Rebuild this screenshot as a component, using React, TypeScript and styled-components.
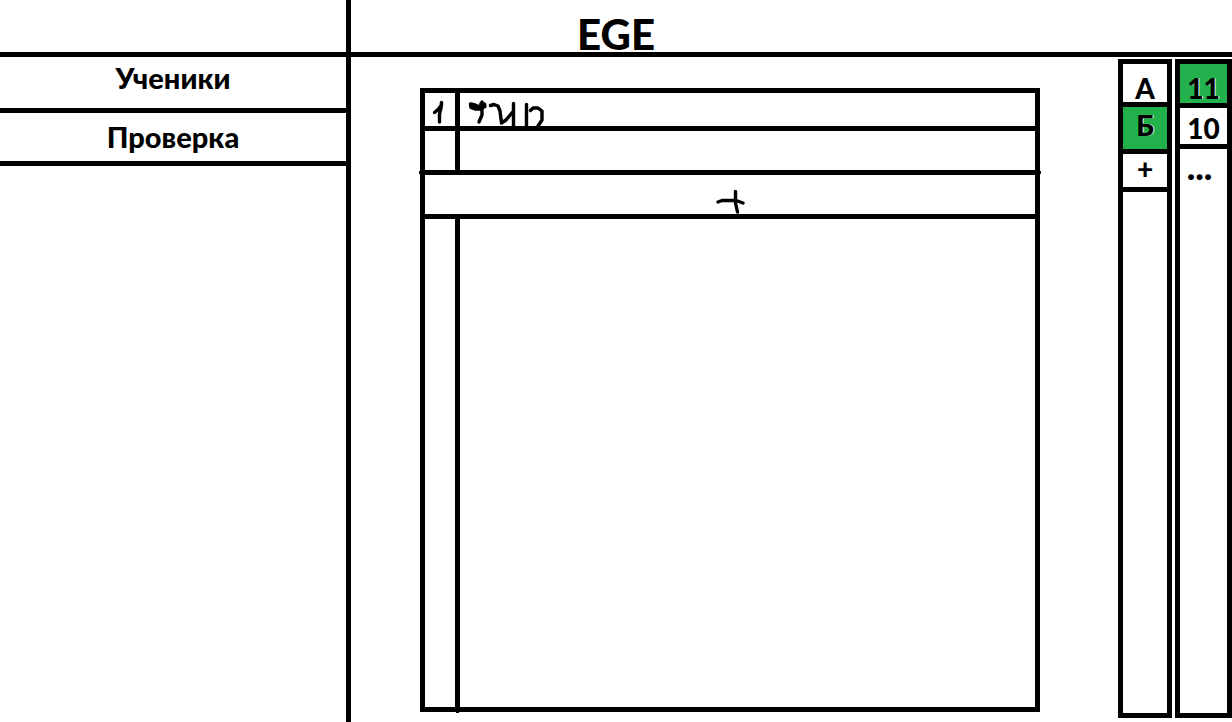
import React from 'react';
import styled, { createGlobalStyle } from 'styled-components';

const INK = '#000';
const PAPER = '#fff';
const GREEN = '#22b14c';

const GlobalStyle = createGlobalStyle`
  * { box-sizing: border-box; }
  body {
    margin: 0;
    background: ${PAPER};
    color: ${INK};
    font-family: Lato, 'Open Sans', 'Noto Sans', sans-serif;
    font-weight: 900;
  }
  button {
    margin: 0;
    padding: 0;
    border: 0;
    background: none;
    color: inherit;
    font: inherit;
    cursor: pointer;
  }
`;

const Page = styled.div`
  display: grid;
  grid-template-columns: 351px 1fr;
  min-height: 100vh;
`;

const Sidebar = styled.aside`
  border-right: 5px solid ${INK};
`;

const SidebarHead = styled.div`
  height: 57px;
  border-bottom: 5px solid ${INK};
`;

const NavButton = styled.button<{ $height: number; $raise: number }>`
  display: block;
  width: 100%;
  height: ${(p) => p.$height}px;
  padding-bottom: ${(p) => p.$raise}px;
  border-bottom: 5px solid ${INK};
  font-size: 29px;
  line-height: 36px;
  text-align: center;
`;

const Content = styled.div`
  display: flex;
  flex-direction: column;
`;

const Header = styled.header`
  height: 57px;
  padding: 10px 351px 0 0;
  border-bottom: 5px solid ${INK};
`;

const Title = styled.h1`
  margin: 0;
  font-size: 42px;
  font-weight: 900;
  line-height: 48px;
  text-align: center;
`;

const Workspace = styled.main`
  flex: 1;
  display: flex;
  gap: 3px;
  padding: 2px 0 4px 69px;
`;

const Sheet = styled.section`
  flex: 1;
  display: flex;
  margin: 29px 75px 6px 0;
`;

const StudentTable = styled.table`
  width: 100%;
  table-layout: fixed;
  border-collapse: separate;
  border-spacing: 5px;
  background: ${INK};
`;

const NumberCol = styled.col`
  width: 30px;
`;

const Row = styled.tr<{ $height?: number }>`
  height: ${(p) => (p.$height ? `${p.$height}px` : 'auto')};
`;

const Cell = styled.td`
  padding: 0;
  background: ${PAPER};
  line-height: 0;
  vertical-align: top;
`;

/* The rule above this cell runs one pixel past the frame on both sides. */
const AddCell = styled(Cell)`
  position: relative;

  &::before {
    content: '';
    position: absolute;
    top: -4px;
    left: -6px;
    right: -6px;
    height: 3px;
    background: ${INK};
  }
`;

/* The column rule ends just below the frame. */
const LastNumberCell = styled(Cell)`
  position: relative;

  &::after {
    content: '';
    position: absolute;
    right: -4px;
    bottom: -6px;
    width: 3px;
    height: 2px;
    background: ${INK};
  }
`;

const AddRowButton = styled.button`
  display: block;
  width: 100%;
  height: 39px;
`;

const Ink = styled.svg`
  display: block;
  fill: none;
  stroke: ${INK};
  stroke-width: 3.4;
  stroke-linecap: round;
  stroke-linejoin: round;
`;

const AddInk = styled(Ink)`
  margin: 0 auto;
`;

const Strip = styled.nav<{ $width: number }>`
  flex: none;
  width: ${(p) => p.$width}px;
  border: 5px solid ${INK};
`;

const StripButton = styled.button<{
  $height: number;
  $top?: number;
  $bottom?: number;
  $active?: boolean;
}>`
  display: block;
  width: 100%;
  height: ${(p) => p.$height}px;
  padding-top: ${(p) => p.$top ?? 0}px;
  padding-bottom: ${(p) => p.$bottom ?? 0}px;
  border-bottom: 5px solid ${INK};
  background: ${(p) => (p.$active ? GREEN : PAPER)};
  text-shadow: ${(p) => (p.$active ? '1px 0 0 #d8f0e0' : 'none')};
  font-size: 28px;
  line-height: 28px;
`;

const MoreButton = styled.button`
  display: block;
  width: 100%;
  padding-right: 8px;
  font-size: 36px;
  line-height: 34px;
`;

export default function App() {
  return (
    <>
      <GlobalStyle />
      <Page>
        <Sidebar>
          <SidebarHead />
          <nav>
            <NavButton $height={56} $raise={10}>Ученики</NavButton>
            <NavButton $height={53} $raise={0}>Проверка</NavButton>
          </nav>
        </Sidebar>
        <Content>
          <Header>
            <Title>EGE</Title>
          </Header>
          <Workspace>
            <Sheet>
              <StudentTable>
                <colgroup>
                  <NumberCol />
                  <col />
                </colgroup>
                <tbody>
                  <Row $height={33}>
                    <Cell>
                      <Ink width="30" height="33" viewBox="425 93 30 33" role="img" aria-label="1">
                        <path d="M434.500 112.500L438 109.500L441.500 105V102.500L441 108L439.500 114V122" />
                      </Ink>
                    </Cell>
                    <Cell>
                      <Ink width="90" height="33" viewBox="460 93 90 33" role="img" aria-label="ФИО">
                        <path d="M470.500 104L471 107.500L475 109L480 109L485 106.500L484.500 104L481 103.500L480 109M470.500 104L475 105L480 107.500M475 107L479 106.500M482 102V115L479 122" />
                        <path d="M490.500 105.500L494 104.500L498 106L500 111L501.500 123L506 120L513.500 111M513.500 103.500V126" />
                        <path d="M526.500 104.500V126M530.500 110.500L533 108H538L542 111V120L538 126" />
                      </Ink>
                    </Cell>
                  </Row>
                  <Row $height={39}>
                    <Cell />
                    <Cell />
                  </Row>
                  <Row $height={39}>
                    <AddCell colSpan={2}>
                      <AddRowButton aria-label="Добавить">
                        <AddInk width="30" height="39" viewBox="715 175 30 39">
                          <path d="M718 202L722 200.500H736L743 203M735.500 191.500V203L737.500 212" />
                        </AddInk>
                      </AddRowButton>
                    </AddCell>
                  </Row>
                  <Row>
                    <LastNumberCell />
                    <Cell />
                  </Row>
                </tbody>
              </StudentTable>
            </Sheet>
            <Strip $width={54} aria-label="Буква класса">
              <StripButton $height={43} $top={10}>А</StripButton>
              <StripButton $height={47} $bottom={6} $active>Б</StripButton>
              <StripButton $height={38} $bottom={5}>+</StripButton>
            </Strip>
            <Strip $width={57} aria-label="Номер класса">
              <StripButton $height={44} $top={8} $active>11</StripButton>
              <StripButton $height={41} $top={4}>10</StripButton>
              <MoreButton>...</MoreButton>
            </Strip>
          </Workspace>
        </Content>
      </Page>
    </>
  );
}
